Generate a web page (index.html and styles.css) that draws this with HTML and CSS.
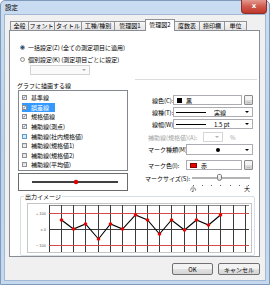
FILE: index.html
```html
<!DOCTYPE html>
<html lang="ja">
<head>
  <meta charset="UTF-8">
  <title>設定</title>
  <link rel="stylesheet" href="styles.css">
</head>
<body>
  <div class="window">
    <div class="titlebar">
      <span class="title">設定</span>
      <span class="close">x</span>
    </div>

    <div class="client">
      <div class="tabs">
        <span class="tab" style="width:19px">全般</span>
        <span class="tab" style="width:27px">フォント</span>
        <span class="tab" style="width:28px">タイトル</span>
        <span class="tab" style="width:34px">工種/種別</span>
        <span class="tab" style="width:32px">管理図1</span>
        <span class="tab active" style="width:30px">管理図2</span>
        <span class="tab" style="width:26px">度数表</span>
        <span class="tab" style="width:26px">捺印欄</span>
        <span class="tab" style="width:23px">単位</span>
      </div>

      <div class="panel">
        <div class="radio-row first"><span class="radio on"></span>一括設定(Z) (全ての測定項目に適用)</div>
        <div class="radio-row"><span class="radio"></span>個別設定(K) (測定項目ごとに設定)</div>
        <div class="select disabled"><span class="arrow"></span></div>
        <div class="sep"></div>

        <div class="columns">
          <div class="left">
            <div class="caption">グラフに描画する線</div>
            <div class="listbox">
              <div class="item"><span class="hl"><span class="check on"></span>基準線</span></div>
              <div class="item sel"><span class="hl"><span class="check on"></span>誤差線</span></div>
              <div class="item"><span class="hl"><span class="check on"></span>規格値線</span></div>
              <div class="item"><span class="hl"><span class="check on"></span>補助線(測点)</span></div>
              <div class="item"><span class="hl"><span class="check hover"></span>補助線(社内規格値)</span></div>
              <div class="item"><span class="hl"><span class="check"></span>補助線(規格値1)</span></div>
              <div class="item"><span class="hl"><span class="check"></span>補助線(規格値2)</span></div>
              <div class="item"><span class="hl"><span class="check"></span>補助線(平均値)</span></div>
            </div>
            <div class="preview">
              <svg width="108" height="16" viewBox="0 0 108 16">
                <line x1="13" y1="8" x2="99" y2="8" stroke="#000" stroke-width="1.5"/>
                <circle cx="57" cy="8" r="2.2" fill="#e00000"/>
              </svg>
            </div>
          </div>

          <div class="right">
            <div class="row r1">
              <span class="lbl w28">線色(C):</span>
              <div class="combo" style="width:69px"><span class="swatch black"></span>黒</div>
              <span class="dots">...</span>
            </div>
            <div class="row r2">
              <span class="lbl w28">線種(T):</span>
              <div class="combo" style="width:80px"><span class="stroke thin"></span>実線<span class="arrow"></span></div>
            </div>
            <div class="row r3">
              <span class="lbl w28">線幅(W):</span>
              <div class="combo" style="width:80px"><span class="stroke thick"></span>1.5 pt<span class="arrow"></span></div>
            </div>
            <div class="row r4 disabled">
              <span class="lbl w58">補助線(規格値)(A):</span>
              <div class="combo off" style="width:20px"><span class="arrow"></span></div>
              <span class="pct">%</span>
            </div>
            <div class="row r5">
              <span class="lbl w41">マーク種類(M):</span>
              <div class="combo tall" style="width:67px"><span class="mark"></span><span class="arrow"></span></div>
            </div>
            <div class="row r6">
              <span class="lbl w41">マーク色(I):</span>
              <div class="combo" style="width:56px"><span class="swatch red"></span>赤</div>
              <span class="dots">...</span>
            </div>
            <div class="row r7">
              <span class="lbl w47">マークサイズ(S):</span>
              <div class="slider"><span class="track"></span><span class="thumb"></span></div>
            </div>
            <div class="ticks">
              <i></i><i></i><i></i><i></i><i></i><i></i><i></i>
            </div>
            <div class="scale"><span>小</span><span>大</span></div>
          </div>
        </div>

        <div class="group">
          <span class="legend">出力イメージ</span>
          <div class="chart">
            <svg width="223" height="48" viewBox="0 0 223 48">
              <path d="M21 1.5H221" stroke="#8a8a8a" stroke-width="1"/>
              <g stroke="#3a3a3a" stroke-width="1">
                <path d="M21.5 1V48M33.5 1V48M45.5 1V48M57.5 1V48M70.5 1V48M82.5 1V48M94.5 1V48M107.5 1V48M119.5 1V48M131.5 1V48M143.5 1V48M156.5 1V48M168.5 1V48M180.5 1V48M192.5 1V48M205.5 1V48M217.5 1V48"/>
                <path d="M21 25.5H221"/>
              </g>
              <path d="M21 9.5H221M21 41.5H221" stroke="#d24a4a" stroke-width="1"/>
              <g font-family="Liberation Sans, sans-serif" font-size="4" fill="#606060" text-anchor="end">
                <text x="18" y="11">+ 100</text>
                <text x="18" y="27">± 0</text>
                <text x="18" y="43">− 100</text>
              </g>
              <polyline fill="none" stroke="#000" stroke-width="1.1"
                points="33.5,16 45.5,25 57.5,20 70.5,35 82.5,20 94.5,25 107.5,11 119.5,16 131.5,30 143.5,16 156.5,26 168.5,16 180.5,21 192.5,11"/>
              <g fill="#e80000">
                <circle cx="33.5" cy="16" r="1.8"/>
                <circle cx="45.5" cy="25" r="1.8"/>
                <circle cx="57.5" cy="20" r="1.8"/>
                <circle cx="70.5" cy="35" r="1.8"/>
                <circle cx="82.5" cy="20" r="1.8"/>
                <circle cx="94.5" cy="25" r="1.8"/>
                <circle cx="107.5" cy="11" r="1.8"/>
                <circle cx="119.5" cy="16" r="1.8"/>
                <circle cx="131.5" cy="30" r="1.8"/>
                <circle cx="143.5" cy="16" r="1.8"/>
                <circle cx="156.5" cy="26" r="1.8"/>
                <circle cx="168.5" cy="16" r="1.8"/>
                <circle cx="180.5" cy="21" r="1.8"/>
                <circle cx="192.5" cy="11" r="1.8"/>
              </g>
            </svg>
          </div>
        </div>
      </div>

      <div class="buttons">
        <button class="btn ok">OK</button>
        <button class="btn cancel">キャンセル</button>
      </div>
    </div>
  </div>
</body>
</html>
```

FILE: styles.css
```css
* {
  box-sizing: border-box;
}

body {
  margin: 0;
  font-family: "Noto Sans CJK JP", "Noto Sans", sans-serif;
  font-size: 6px;
  color: #000;
  background: #fff;
}

/* Window frame */
.window {
  width: 270px;
  height: 285px;
  padding: 0 4px 4px;
  border: 1px solid #7f9abb;
  border-radius: 5px 5px 0 0;
  background: linear-gradient(#cadcf1, #bcd2eb 50%, #c5d8ee);
}
.titlebar {
  height: 14px;
  display: flex;
  justify-content: space-between;
  align-items: flex-start;
}
.title {
  font-size: 6.5px;
  line-height: 12px;
}
.close {
  width: 26px;
  height: 14px;
  margin: -1px -2px 0 0;
  border: 1px solid #8b2f27;
  border-top: 0;
  border-radius: 0 0 4px 4px;
  background: linear-gradient(#e49a90, #cf5a4d 50%, #c0382b);
  color: #fff;
  font-family: "DejaVu Sans", sans-serif;
  font-weight: bold;
  font-size: 7px;
  line-height: 12px;
  text-align: center;
}

.client {
  height: 265px;
  background: #f0f0f0;
  outline: 1px solid #a3b8d2;
}

/* Tabs */
.tabs {
  display: flex;
  align-items: flex-end;
  height: 15px;
  padding: 4px 0 0 5px;
}
.tab {
  flex: none;
  height: 9px;
  margin-right: -1px;
  border: 1px solid #8e9296;
  border-bottom: 0;
  background: linear-gradient(#f6f6f6, #e4e4e4);
  text-align: center;
  line-height: 8px;
  white-space: nowrap;
}
.tab.active {
  position: relative;
  z-index: 1;
  height: 12px;
  margin-bottom: -1px;
  background: #fff;
  line-height: 10px;
}

.panel {
  width: 251px;
  height: 227px;
  margin-left: 4px;
  border: 1px solid #898c95;
  background: #fff;
}

/* Radios */
.radio-row {
  display: flex;
  align-items: center;
  height: 8px;
  margin-top: 4px;
  padding-left: 10px;
  white-space: nowrap;
}
.radio-row.first {
  margin-top: 12px;
}
.radio {
  width: 5px;
  height: 5px;
  margin-right: 3px;
  border: 1px solid #8f8f8f;
  border-radius: 50%;
  background: #f2f2f2;
}
.radio.on {
  background: radial-gradient(circle, #1e4f91 0 1.2px, #f2f2f2 1.7px);
}

.select {
  display: flex;
  align-items: center;
  width: 60px;
  height: 10px;
  margin: 2px 0 0 20px;
  border: 1px solid #d3d3d3;
  background: #fafafa;
}
.select .arrow {
  border-top-color: #a8a8a8;
}

.sep {
  width: 122px;
  margin: 4px 0 0 125px;
  border-top: 1px solid #dcdcdc;
}

.columns {
  display: flex;
  margin-top: 2px;
}

/* Left column: line list */
.left {
  width: 118px;
  padding-left: 8px;
}
.caption {
  height: 8px;
  margin-left: -1px;
  line-height: 8px;
  white-space: nowrap;
}
.listbox {
  width: 110px;
  height: 81px;
  padding: 2px 0 0 3px;
  border: 1px solid #828790;
}
.item {
  display: flex;
  align-items: center;
  height: 9.6px;
  white-space: nowrap;
}
.hl {
  display: inline-flex;
  align-items: center;
  height: 9px;
  padding-right: 6px;
}
.item.sel .hl {
  background: #3399ff;
  color: #fff;
}
.check {
  display: flex;
  align-items: center;
  justify-content: center;
  flex: none;
  width: 5px;
  height: 5px;
  margin-right: 4px;
  border: 1px solid #8e8f8f;
  background: linear-gradient(#dcdcdc, #f4f4f4);
}
.check.on {
  background: #fff;
}
.check.on::after {
  content: "✓";
  font-family: "DejaVu Sans", sans-serif;
  font-weight: bold;
  font-size: 5px;
  line-height: 5px;
  color: #1d4178;
}
.check.hover {
  border-color: #5b9ccc;
  background: #cfe9fa;
}

.preview {
  width: 110px;
  height: 18px;
  margin-top: 2px;
  border: 1px solid #6b6b6b;
}
.preview svg {
  display: block;
}

/* Right column: properties */
.right {
  width: 112px;
  margin-left: 17px;
  padding-top: 13px;
}
.row {
  display: flex;
  align-items: center;
  height: 10px;
  white-space: nowrap;
}
.r2, .r3, .r5 {
  margin-top: 2px;
}
.r4, .r7 {
  margin-top: 3px;
}
.r5 {
  height: 11px;
}
.r6 {
  margin-top: 5px;
}
.lbl {
  flex: none;
  padding-left: 3px;
}
.w28 { width: 28px; padding-left: 7px; }
.w58 { width: 58px; }
.w41 { width: 41px; }
.w47 { width: 47px; padding-left: 0; }

.disabled {
  color: #a3a3a3;
}
.pct {
  margin-left: 7px;
}

.combo {
  display: flex;
  align-items: center;
  flex: none;
  height: 10px;
  padding-left: 2px;
  border: 1px solid #abadb3;
  background: #fff;
}
.combo.tall {
  height: 11px;
}
.combo.off {
  border-color: #d6d6d6;
}
.combo.off .arrow {
  border-top-color: #b0b0b0;
}
.arrow {
  margin: 0 3px 0 auto;
  border-left: 2px solid transparent;
  border-right: 2px solid transparent;
  border-top: 2px solid #000;
}
.swatch {
  width: 5px;
  height: 5px;
  margin: 0 4px 0 1px;
}
.swatch.black {
  background: #000;
}
.swatch.red {
  width: 7px;
  background: #e60000;
  border: 1px solid #8a0000;
}
.stroke {
  width: 30px;
  margin-right: 8px;
  border-top: 1px solid #000;
}
.stroke.thick {
  border-top-width: 1.5px;
}
.mark {
  width: 4px;
  height: 4px;
  margin-left: 27px;
  border-radius: 50%;
  background: #000;
}
.dots {
  width: 9px;
  height: 10px;
  margin-left: 2px;
  border: 1px solid #8a8a8a;
  border-radius: 1px;
  background: linear-gradient(#f3f3f3 50%, #dedede 50%, #d2d2d2);
  font-size: 4px;
  line-height: 10px;
  text-align: center;
  color: #333;
}

.slider {
  position: relative;
  width: 58px;
  height: 10px;
  display: flex;
  align-items: center;
}
.track {
  width: 100%;
  height: 2px;
  border: 1px solid #b4b4b4;
  background: #e7e7e7;
}
.thumb {
  position: absolute;
  left: 25px;
  top: 1px;
  width: 5px;
  height: 7px;
  border: 1px solid #7c7c7c;
  border-radius: 2px 2px 3px 3px;
  background: linear-gradient(#fbfbfb, #dcdcdc);
}
.ticks {
  display: flex;
  justify-content: space-between;
  width: 56px;
  height: 3px;
  margin-left: 48px;
  padding-top: 2px;
}
.ticks i {
  width: 1px;
  height: 1px;
  background: #6a6a6a;
}
.scale {
  display: flex;
  justify-content: space-between;
  width: 60px;
  margin-left: 45px;
  line-height: 6px;
}

/* Output image group */
.group {
  width: 235px;
  height: 60px;
  margin: 4px 0 0 10px;
  padding-left: 6px;
  border: 1px solid #d5dfe5;
  border-radius: 2px;
}
.legend {
  display: block;
  width: max-content;
  height: 7px;
  margin: -4px 0 0 -3px;
  padding: 0 1px;
  background: #fff;
  line-height: 7px;
}
.chart {
  width: 225px;
  height: 50px;
  margin-top: 3px;
  border: 1px solid #c6c6c6;
  background: #fff;
}
.chart svg {
  display: block;
}

/* Dialog buttons */
.buttons {
  display: flex;
  justify-content: flex-end;
  gap: 5px;
  margin-top: 6px;
  padding-right: 5px;
}
.btn {
  height: 12px;
  padding: 0;
  border: 1px solid #707070;
  border-radius: 2px;
  background: linear-gradient(#f3f3f3 50%, #e2e2e2 50%, #d4d4d4);
  font-family: inherit;
  font-size: 6px;
  color: #000;
}
.btn.ok {
  width: 41px;
}
.btn.cancel {
  width: 42px;
}
```
